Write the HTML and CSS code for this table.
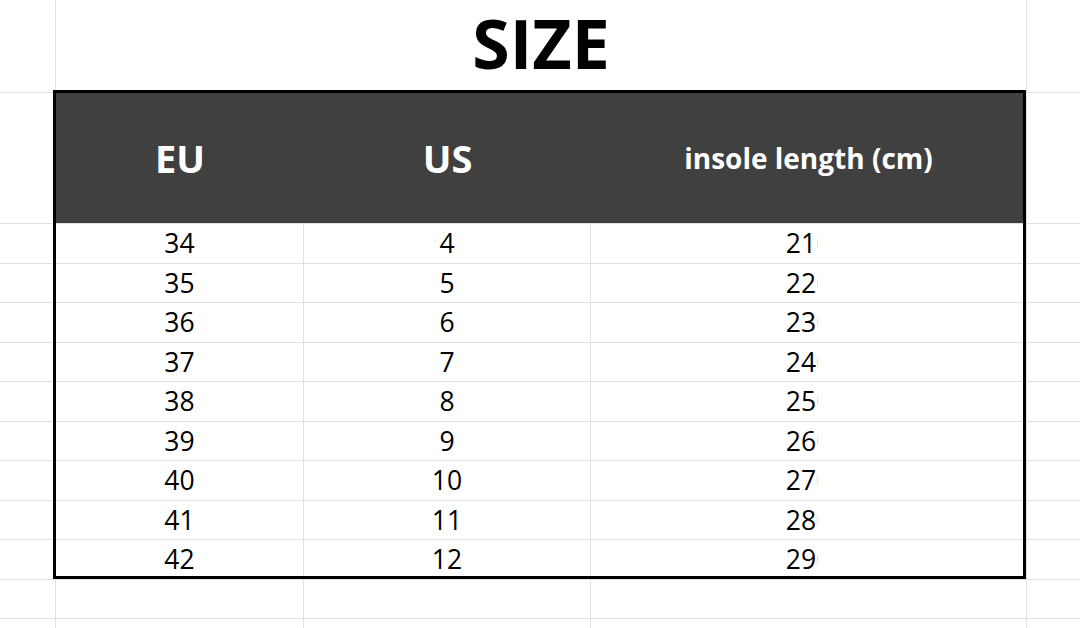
FILE: index.html
```html
<!DOCTYPE html>
<html>
<head>
<meta charset="utf-8">
<title>SIZE</title>
<link rel="stylesheet" href="styles.css">
</head>
<body>
<div class="sheet">
  <div class="cell title">SIZE</div>

  <div class="table">
    <div class="head">
      <div class="hcell">EU</div>
      <div class="hcell">US</div>
      <div class="hcell small">insole length (cm)</div>
    </div>
    <div class="cell num">34</div><div class="cell num">4</div><div class="cell num"><span class="trunc">210</span></div>
    <div class="cell num">35</div><div class="cell num">5</div><div class="cell num"><span class="trunc">220</span></div>
    <div class="cell num">36</div><div class="cell num">6</div><div class="cell num"><span class="trunc">230</span></div>
    <div class="cell num">37</div><div class="cell num">7</div><div class="cell num"><span class="trunc">240</span></div>
    <div class="cell num">38</div><div class="cell num">8</div><div class="cell num"><span class="trunc">250</span></div>
    <div class="cell num">39</div><div class="cell num">9</div><div class="cell num"><span class="trunc">260</span></div>
    <div class="cell num">40</div><div class="cell num">10</div><div class="cell num"><span class="trunc">270</span></div>
    <div class="cell num">41</div><div class="cell num">11</div><div class="cell num"><span class="trunc">280</span></div>
    <div class="cell num">42</div><div class="cell num">12</div><div class="cell num"><span class="trunc">290</span></div>
  </div>

  <div class="cell"></div><div class="cell"></div>
  <div class="cell"></div><div class="cell"></div>
  <div class="cell"></div><div class="cell"></div>
  <div class="cell"></div><div class="cell"></div>
  <div class="cell"></div><div class="cell"></div>
  <div class="cell"></div><div class="cell"></div>
  <div class="cell"></div><div class="cell"></div>
  <div class="cell"></div><div class="cell"></div>
  <div class="cell"></div><div class="cell"></div>
  <div class="cell"></div><div class="cell"></div>
  <div class="cell"></div><div class="cell"></div>
  <div class="cell"></div><div class="cell"></div>
  <div class="cell"></div><div class="cell"></div><div class="cell"></div><div class="cell"></div><div class="cell"></div>
  <div class="cell"></div><div class="cell"></div><div class="cell"></div><div class="cell"></div><div class="cell"></div>
</div>
</body>
</html>
```

FILE: styles.css
```css
html, body {
  margin: 0;
  padding: 0;
  background: #ffffff;
}

body {
  width: 1080px;
  height: 628px;
  overflow: hidden;
  font-family: "Open Sans", "Noto Sans", sans-serif;
  color: #000;
}

.sheet {
  display: grid;
  grid-template-columns: 55px 247px 286px 435px 1fr;
  grid-template-rows: 92px 130px repeat(11, 38.5px);
  gap: 1px;
  background: #e0e0e0;
}

.cell {
  background: #ffffff;
}

.title {
  grid-column: 2 / 5;
  grid-row: 1;
  display: flex;
  align-items: center;
  justify-content: center;
  font-size: 68px;
  font-weight: 700;
  line-height: 1.2;
  padding-bottom: 6px;
  box-sizing: border-box;
}

.table {
  grid-column: 2 / 5;
  grid-row: 2 / 12;
  display: grid;
  grid-template-columns: subgrid;
  grid-template-rows: subgrid;
  position: relative;
}

.table::after {
  content: "";
  position: absolute;
  top: -3px;
  left: -3px;
  right: 0;
  bottom: 0;
  border: 3px solid #000;
  pointer-events: none;
}

.head {
  grid-column: 1 / 4;
  background: #404040;
  display: grid;
  grid-template-columns: 248px 287px 1fr;
  color: #ffffff;
  font-weight: 700;
}

.hcell {
  display: flex;
  align-items: center;
  justify-content: center;
  font-size: 38px;
  line-height: 1;
}

.hcell.small {
  font-size: 28px;
}

.num {
  display: flex;
  align-items: center;
  justify-content: center;
  font-size: 26.5px;
  line-height: 1;
}

.trunc {
  display: inline-block;
  clip-path: inset(0 14px 0 0);
}
```
